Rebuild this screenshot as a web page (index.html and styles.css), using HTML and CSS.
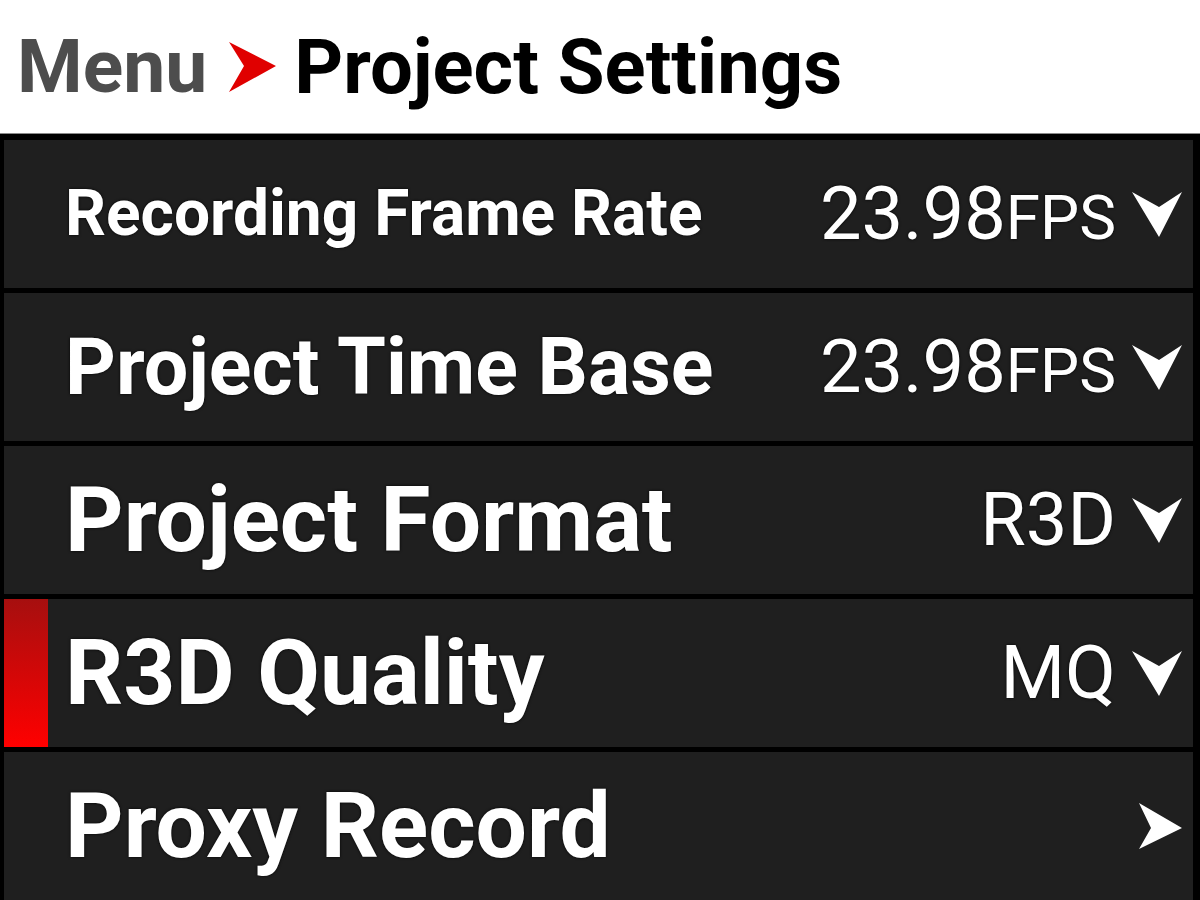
FILE: index.html
```html
<!DOCTYPE html>
<html>

<head>
	<meta charset="utf-8">
	<title>Project Settings</title>
	<link rel="stylesheet" href="styles.css">
</head>

<body>

	<header class="topbar">
		<span class="crumb">Menu</span>
		<svg class="crumbArrow" viewBox="0 0 47 50" width="47" height="50">
			<polygon points="0,0 47,24 0,50 15,24" fill="#e00000" />
		</svg>
		<h1 class="title">Project Settings</h1>
	</header>

	<main class="menuList">

		<div class="row">
			<div class="marker"></div>
			<span class="label label-small">Recording Frame Rate</span>
			<span class="value"><span class="num">23.98</span><span class="unit">FPS</span>
				<svg class="chevron" viewBox="0 0 50 45" width="50" height="45">
					<polygon points="0,0 27,15 50,0 27,45" fill="#fff" />
				</svg>
			</span>
		</div>

		<div class="row">
			<div class="marker"></div>
			<span class="label label-medium">Project Time Base</span>
			<span class="value"><span class="num">23.98</span><span class="unit">FPS</span>
				<svg class="chevron" viewBox="0 0 50 45" width="50" height="45">
					<polygon points="0,0 27,15 50,0 27,45" fill="#fff" />
				</svg>
			</span>
		</div>

		<div class="row">
			<div class="marker"></div>
			<span class="label label-big">Project Format</span>
			<span class="value"><span class="num">R3D</span>
				<svg class="chevron" viewBox="0 0 50 45" width="50" height="45">
					<polygon points="0,0 27,15 50,0 27,45" fill="#fff" />
				</svg>
			</span>
		</div>

		<div class="row selected">
			<div class="marker"></div>
			<span class="label label-big">R3D Quality</span>
			<span class="value"><span class="num">MQ</span>
				<svg class="chevron" viewBox="0 0 50 45" width="50" height="45">
					<polygon points="0,0 27,15 50,0 27,45" fill="#fff" />
				</svg>
			</span>
		</div>

		<div class="row">
			<div class="marker"></div>
			<span class="label label-big">Proxy Record</span>
			<span class="value">
				<svg class="goArrow" viewBox="0 0 43 46" width="43" height="46">
					<polygon points="0,0 43,25 0,46 12,25" fill="#fff" />
				</svg>
			</span>
		</div>

	</main>

</body>

</html>
```

FILE: styles.css
```css
body {
	margin: 0;
	background-color: #000;
	font-family: Roboto, "Liberation Sans", sans-serif;
	overflow: hidden;
	height: 900px;
}

.topbar {
	display: flex;
	align-items: center;
	height: 134px;
	background-color: #fff;
	border-bottom: 1px solid #8a8a8a;
	padding-left: 17px;
	box-sizing: border-box;
}

.crumb {
	font-size: 75px;
	font-weight: 700;
	color: #4d4d4d;
	line-height: 1;
}

.crumbArrow {
	margin: 0 18px 0 22px;
}

.title {
	margin: 0;
	font-size: 76px;
	font-weight: 700;
	color: #000;
	line-height: 1;
}

.menuList {
	display: flex;
	flex-direction: column;
	gap: 5px;
	padding: 6px 7px 0 4px;
}

.row {
	display: flex;
	align-items: center;
	height: 148px;
	background-color: #1f1f1f;
	padding-right: 11px;
	color: #fff;
}

.marker {
	width: 44px;
	align-self: stretch;
	margin-right: 17px;
}

.selected .marker {
	background: linear-gradient(#a60f0f, #ff0000);
}

.label {
	font-weight: 700;
	line-height: 1;
	white-space: nowrap;
	text-shadow: 0 0 3px #000;
}

.label-small {
	font-size: 64px;
}

.label-medium {
	font-size: 79px;
}

.label-big {
	font-size: 91px;
}

.value {
	margin-left: auto;
	display: flex;
	align-items: baseline;
	line-height: 1;
	text-shadow: 0 0 3px #000;
}

.num {
	font-size: 74px;
	font-weight: 400;
}

.unit {
	font-size: 62px;
	font-weight: 400;
}

.chevron {
	margin-left: 16px;
	align-self: center;
}

.goArrow {
	align-self: center;
}
```
